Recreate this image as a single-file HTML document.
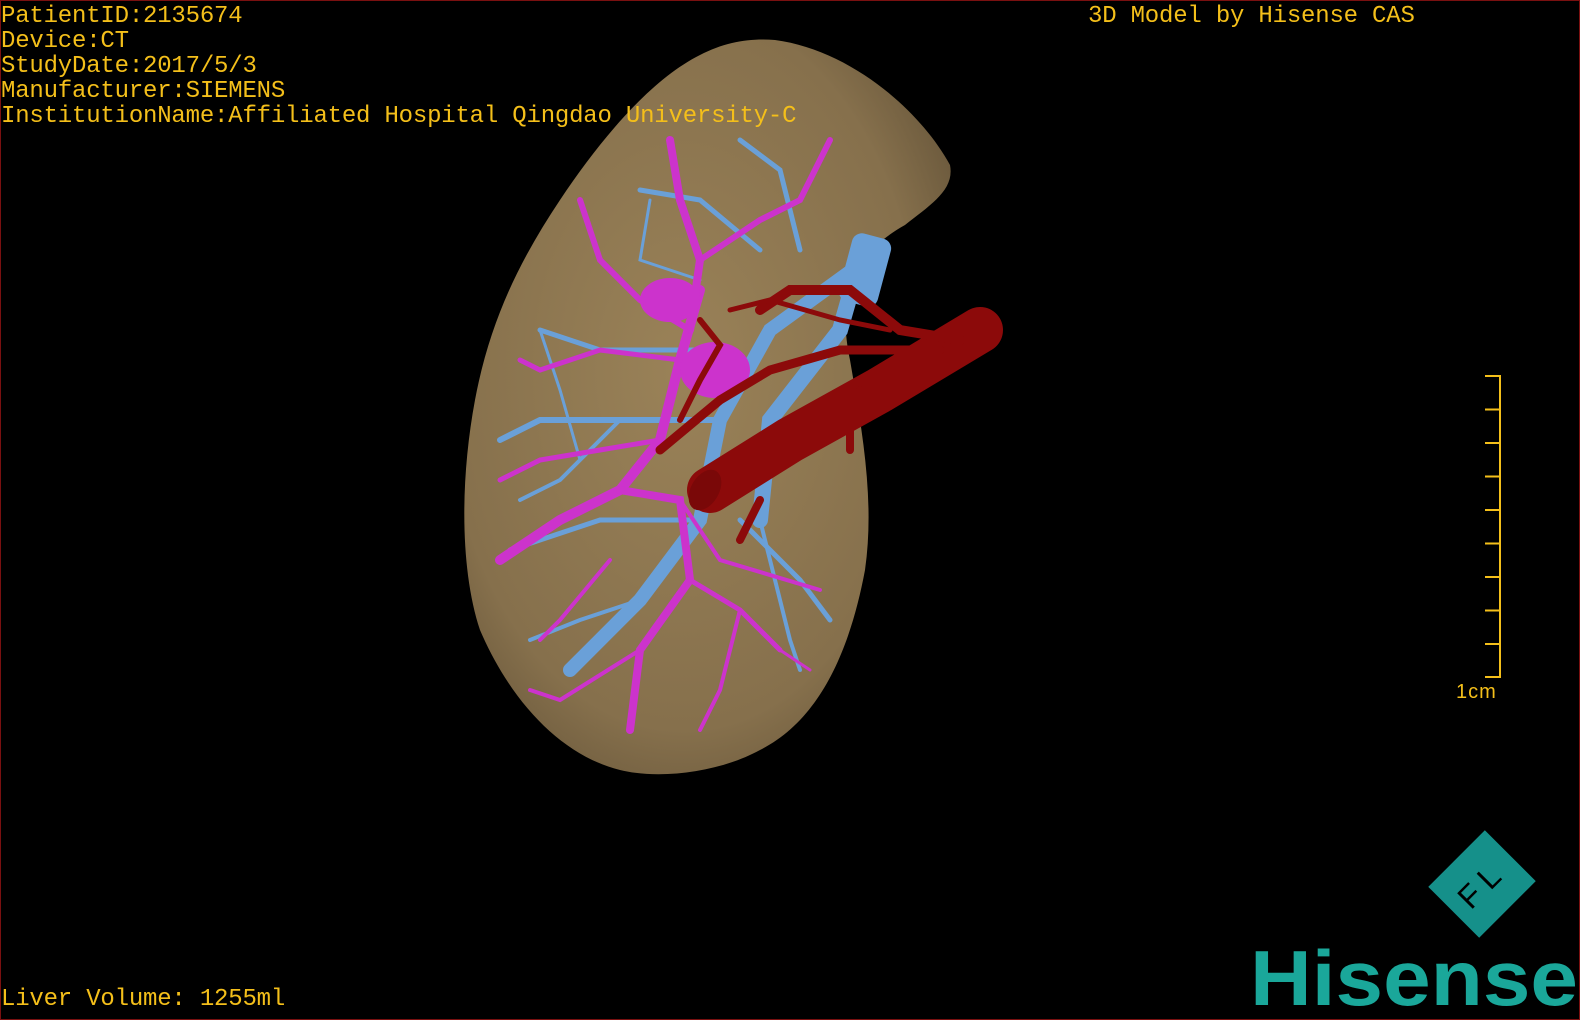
<!DOCTYPE html>
<html><head><meta charset="utf-8"><style>
html,body{margin:0;padding:0;background:#000;}
body{width:1580px;height:1020px;position:relative;overflow:hidden;}
.frame{position:absolute;left:0;top:0;width:1578px;height:1018px;border:1px solid #7a1010;}
.t{position:absolute;color:#f4bf1a;font-family:"Liberation Mono",monospace;font-size:24px;line-height:25px;white-space:pre;letter-spacing:-0.2px;}
svg{position:absolute;left:0;top:0;}
</style></head><body>
<svg width="1580" height="1020" viewBox="0 0 1580 1020">
<defs>
<radialGradient id="lg" cx="0.45" cy="0.45" r="0.7">
<stop offset="0" stop-color="#9a8258"/><stop offset="0.7" stop-color="#86704c"/><stop offset="1" stop-color="#5e4e35"/>
</radialGradient>
</defs>
<path d="M775,40 C850,50 920,110 950,165 C955,190 930,205 905,225 C860,250 835,290 850,360 C862,430 875,500 865,570 C850,650 820,720 760,750 C720,772 660,780 620,770 C560,755 510,700 480,630 C460,570 460,480 475,400 C490,320 520,260 560,200 C600,140 650,80 700,55 C725,42 750,38 775,40 Z" fill="url(#lg)"/>
<g fill="none" stroke="#6aa0d8" stroke-linecap="round">
<path d="M880,250 L770,330 L720,420 L700,520 L640,600 L570,670" stroke-width="14"/>
<path d="M860,260 L840,330 L770,420 L760,520" stroke-width="16"/>
<path d="M720,420 L620,420 L540,420 L500,440" stroke-width="6"/>
<path d="M700,350 L600,350 L540,330" stroke-width="5"/>
<path d="M760,250 L700,200 L640,190" stroke-width="5"/>
<path d="M800,250 L780,170 L740,140" stroke-width="5"/>
<path d="M740,520 L800,580 L830,620" stroke-width="5"/>
<path d="M700,520 L600,520 L510,550" stroke-width="5"/>
<path d="M640,600 L580,620 L530,640" stroke-width="4"/>
<path d="M760,520 L790,640 L800,670" stroke-width="4"/>
<path d="M620,420 L560,480 L520,500" stroke-width="4"/>
<path d="M540,330 L560,390 L580,460" stroke-width="3"/>
<path d="M650,200 L640,260 L700,280" stroke-width="3"/>
</g>
<rect x="845" y="235" width="40" height="70" rx="10" fill="#6aa0d8" transform="rotate(15 865 270)"/>
<g fill="none" stroke="#cc33cc" stroke-linecap="round">
<path d="M700,290 L680,360 L660,440 L620,490 L560,520 L500,560" stroke-width="10"/>
<path d="M690,330 L700,260 L680,200 L670,140" stroke-width="8"/>
<path d="M700,260 L760,220 L800,200 L830,140" stroke-width="6"/>
<path d="M690,330 L640,300 L600,260 L580,200" stroke-width="6"/>
<path d="M680,360 L600,350 L540,370 L520,360" stroke-width="5"/>
<path d="M660,440 L600,450 L540,460 L500,480" stroke-width="5"/>
<path d="M620,490 L680,500 L690,580 L640,650 L630,730" stroke-width="8"/>
<path d="M690,580 L740,610 L780,650" stroke-width="5"/>
<path d="M680,500 L720,560 L820,590" stroke-width="4"/>
<path d="M640,650 L560,700 L530,690" stroke-width="4"/>
<path d="M610,560 L560,620 L540,640" stroke-width="4"/>
<path d="M740,610 L720,690 L700,730" stroke-width="4"/>
<path d="M780,650 L810,670" stroke-width="3"/>
</g>
<ellipse cx="715" cy="370" rx="35" ry="28" fill="#cc33cc"/>
<ellipse cx="670" cy="300" rx="30" ry="22" fill="#cc33cc"/>
<g fill="none" stroke="#8c0a0a" stroke-linecap="round">
<path d="M980,330 L880,390 L790,440 L710,490" stroke-width="46"/>
<path d="M960,340 L900,330 L850,290 L790,290 L760,310" stroke-width="10"/>
<path d="M940,350 L840,350 L770,370 L720,400 L660,450" stroke-width="9"/>
<path d="M860,390 L850,420 L850,450" stroke-width="8"/>
<path d="M760,500 L740,540" stroke-width="8"/>
<path d="M700,320 L720,345 L700,380 L680,420" stroke-width="6"/>
<path d="M890,330 L840,320 L770,300 L730,310" stroke-width="5"/>
</g>
<ellipse cx="705" cy="490" rx="14" ry="22" fill="#7a0808" transform="rotate(30 705 490)"/>
<g stroke="#f4bf1a" stroke-width="2" fill="none">
<path d="M1485,376 H1500 V677 H1485"/>
<path d="M1485,409.5H1500M1485,443H1500M1485,476.5H1500M1485,510H1500M1485,543.5H1500M1485,577H1500M1485,610.5H1500M1485,644H1500"/>
</g>
<text x="1456" y="698" fill="#f4bf1a" font-family="Liberation Sans,sans-serif" font-size="20" letter-spacing="1">1cm</text>
<g transform="translate(1482,884) rotate(-45)">
<rect x="-40" y="-36" width="80" height="72" fill="#15908a"/>
<text x="0" y="11" fill="#000" text-anchor="middle" font-family="Liberation Sans,sans-serif" font-size="32" letter-spacing="8">FL</text>
</g>
<text x="1250" y="1005" fill="#1aa79a" font-family="Liberation Sans,sans-serif" font-weight="bold" font-size="78" textLength="328" lengthAdjust="spacingAndGlyphs">Hisense</text>
</svg>
<div class="frame"></div>
<div class="t" style="left:1px;top:4px">PatientID:2135674
Device:CT
StudyDate:2017/5/3
Manufacturer:SIEMENS
InstitutionName:Affiliated Hospital Qingdao University-C</div>
<div class="t" style="left:1088px;top:4px">3D Model by Hisense CAS</div>
<div class="t" style="left:1px;top:987px">Liver Volume: 1255ml</div>
</body></html>
